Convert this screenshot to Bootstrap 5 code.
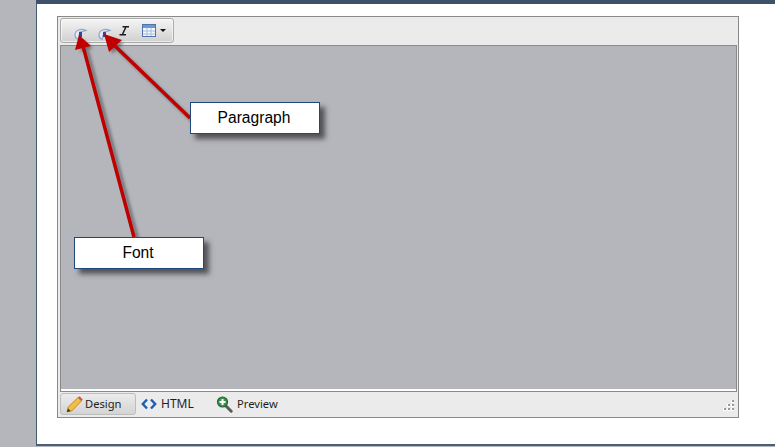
<!DOCTYPE html>
<html lang="en">
<head>
<meta charset="utf-8">
<title>Editor</title>
<link href="https://cdn.jsdelivr.net/npm/bootstrap@5.3.0/dist/css/bootstrap.min.css" rel="stylesheet">
<style>
html,body{height:447px;overflow:hidden;}
body{background:#b5b6bb;font-family:"Liberation Sans",Arial,sans-serif;font-size:12px;color:#222;}
.page-sheet{margin-left:36px;width:739px;height:446px;background:#fff;border-left:1px solid #45596e;border-bottom:2px solid #4a6078;border-top:4px solid #3d5268;padding:12px 37px 0 20px;}
.ed-frame{width:682px;height:402px;border:1px solid #8a8a8a;background:#ebebeb;position:relative;}
.ed-tools{height:28px;padding:1px 0 0 2px;}
.tool-group{width:114px;height:25px;border:1px solid #ababab;border-radius:3px;background:linear-gradient(#f5f5f5,#d0d0d0);padding-left:11px;box-shadow:inset 0 0 0 1px rgba(255,255,255,.55);}
.tool-group svg{display:block;flex:none;}
.tool-para{margin-left:8px;}
.tool-ital{margin-left:6px;}
.tool-table{margin-left:12px;}
.tool-caret{margin-left:4px;}
.tool-low{margin-top:9px;}
.ed-canvas{height:347px;margin-left:2px;width:677px;background:#b5b6bb;border:1px solid #8a8a8a;box-shadow:inset 0 -2px 0 #fff;}
.ed-foot{height:25px;padding:1px 2px 0 2px;}
.mode-item{height:22px;padding:0 5px;gap:4px;font-family:"Noto Sans","DejaVu Sans",sans-serif;font-size:11.2px;color:#1e1e1e;line-height:1;}
.mode-on{width:76px;gap:2px;background:linear-gradient(#ebebeb,#d4d4d4);border:1px solid #bdbdbd;border-radius:3px;}
.mode-html{width:75px;font-size:12px;}
.grip{width:12px;height:12px;margin-right:1px;margin-top:6px;}
.note-box{position:absolute;background:#fff;border:1px solid #1f497d;box-shadow:5px 5px 5px rgba(50,50,55,.75);font-family:"Liberation Sans",Arial,sans-serif;font-size:15.6px;color:#000;width:130px;height:32px;padding-right:2px;}
.note-par{left:132px;top:85px;}
.note-font{left:16px;top:220px;}
.arrow-layer{position:absolute;left:-58px;top:-17px;pointer-events:none;}
</style>
</head>
<body>
<div class="page-sheet">
  <div class="ed-frame">
    <div class="ed-tools">
      <div class="tool-group d-flex align-items-center">
        <svg class="tool-low" width="16" height="16" viewBox="0 0 16 16"><path d="M14 3.500C9 1 3 3 3 8c0 2 1 3.500 3 4.500L8 5z" fill="#e6ebf4" stroke="#8ea6cc" stroke-width="1.200"/><rect x="7" y="5" width="3" height="5" fill="#2a4aa0"/></svg>
        <svg class="tool-low tool-para" width="16" height="16" viewBox="0 0 16 16"><path d="M14 3.500C9 1 3 3 3 8c0 2 1 3.500 3 4.500L8 5z" fill="#e6ebf4" stroke="#8ea6cc" stroke-width="1.200"/><rect x="7" y="5" width="3" height="5" fill="#2a4aa0"/></svg>
        <svg class="tool-ital" width="12" height="14" viewBox="0 0 12 14"><path d="M4.500 2.800h6.500M1.500 10.800h6.500M8 2.800L4.300 10.800" fill="none" stroke="#1c1c1c" stroke-width="1.500"/></svg>
        <svg class="tool-table" width="14" height="13" viewBox="0 0 14 13"><rect x=".5" y=".5" width="13" height="12" fill="#f4f7fc" stroke="#4f73aa"/><rect x="1" y="1" width="12" height="3" fill="#6f97d2"/><path d="M5 4v8M9 4v8M1 7h12M1 10h12" stroke="#a5bde0"/></svg>
        <svg class="tool-caret" width="6" height="3" viewBox="0 0 6 3"><path d="M0 0h6L3 3z" fill="#111"/></svg>
      </div>
    </div>
    <div class="ed-canvas"></div>
    <div class="ed-foot d-flex align-items-start">
      <div class="mode-item mode-on d-flex align-items-center">
        <svg width="17" height="17" viewBox="0 0 17 17"><path d="M1 16l1.200-5L12 1.500l3.500 3.500L6 14.800z" fill="#f2bd45" stroke="#b97a18" stroke-width=".8"/><path d="M12 1.500l3.500 3.500 1.200-1.600L13.600.3z" fill="#d94f3d"/><path d="M1 16l1-3.500 2.500 2.500z" fill="#3b2a1a"/></svg>
        <span>Design</span>
      </div>
      <div class="mode-item mode-html d-flex align-items-center">
        <svg width="16" height="12" viewBox="0 0 16 12"><path d="M6 1.500L1.800 6 6 10.500M10 1.500L14.200 6 10 10.500" fill="none" stroke="#1c5fae" stroke-width="2.400"/></svg>
        <span>HTML</span>
      </div>
      <div class="mode-item d-flex align-items-center">
        <svg width="17" height="17" viewBox="0 0 17 17"><path d="M10 10L15.200 15.200" stroke="#5a5a5a" stroke-width="3" stroke-linecap="round"/><circle cx="6.500" cy="6" r="5" fill="#3f8f4f" stroke="#1f6b2e" stroke-width="1.200"/><path d="M6.500 3v6M3.500 6h6" stroke="#fff" stroke-width="2"/></svg>
        <span>Preview</span>
      </div>
      <svg class="grip ms-auto" viewBox="0 0 12 12"><g fill="#fff"><rect x="8" y="1" width="3" height="3"/><rect x="4" y="5" width="3" height="3"/><rect x="8" y="5" width="3" height="3"/><rect y="9" width="3" height="3"/><rect x="4" y="9" width="3" height="3"/><rect x="8" y="9" width="3" height="3"/></g><g fill="#9a9a9a"><rect x="9" y="1" width="2" height="2"/><rect x="5" y="5" width="2" height="2"/><rect x="9" y="5" width="2" height="2"/><rect x="1" y="9" width="2" height="2"/><rect x="5" y="9" width="2" height="2"/><rect x="9" y="9" width="2" height="2"/></g></svg>
    </div>
    <svg class="arrow-layer" width="260" height="260" viewBox="0 0 260 260">
      <defs><filter id="soft" x="-30%" y="-30%" width="170%" height="170%"><feGaussianBlur stdDeviation="1.500"/></filter></defs>
      <g filter="url(#soft)" fill="#3a3a3f" stroke="#3a3a3f" opacity=".55" transform="translate(4,4)">
        <path d="M134 237L83 46M190 118L114 45" fill="none" stroke-width="3.500"/>
        <path d="M80 36L89 44 76 48z M105 35L120 39 108 50z" stroke="none"/>
      </g>
      <g fill="#c00000" stroke="#c00000">
        <path d="M134 237L83 46M190 118L114 45" fill="none" stroke-width="3.500"/>
        <path d="M79 35L91 46 75 50z M104 34L122 40 109 52z" stroke="none"/>
      </g>
    </svg>
    <div class="note-box note-par d-flex align-items-center justify-content-center">Paragraph</div>
    <div class="note-box note-font d-flex align-items-center justify-content-center">Font</div>
  </div>
</div>
<script src="https://cdn.jsdelivr.net/npm/bootstrap@5.3.0/dist/js/bootstrap.bundle.min.js"></script>
</body>
</html>
